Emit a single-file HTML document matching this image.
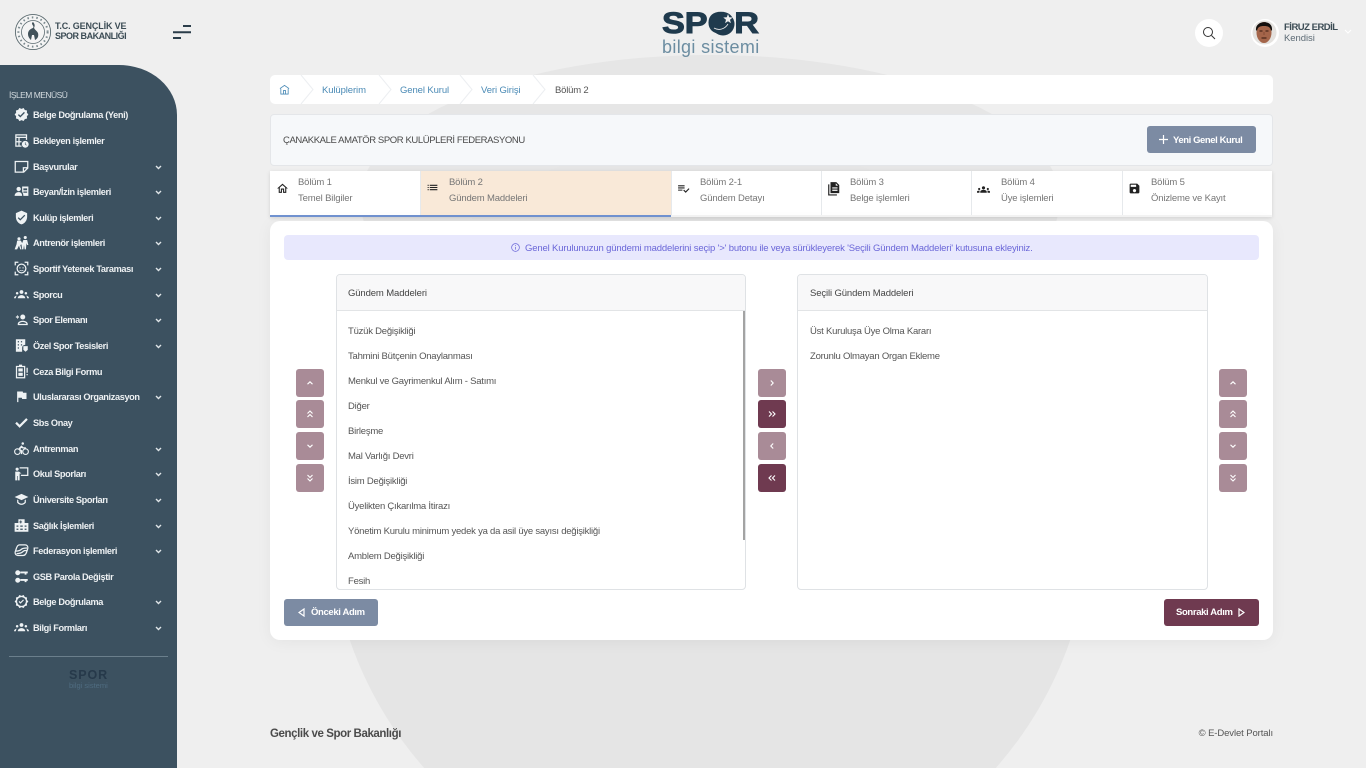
<!DOCTYPE html>
<html lang="tr"><head><meta charset="utf-8"><title>Spor Bilgi Sistemi</title>
<style>
*{box-sizing:border-box}
html,body{margin:0;padding:0;width:1366px;height:768px;overflow:hidden}
body{background:#efefef;font-family:"Liberation Sans",sans-serif;font-size:9.5px;color:#555}
#root{position:relative;width:1366px;height:768px;overflow:hidden;background:#efefef}
.a,.t,.i{position:absolute}
.t{white-space:nowrap;line-height:12px}
#side{position:absolute;left:0;top:65px;width:177px;height:703px;background:#3c5160;border-top-right-radius:58px 50px}
.m{position:absolute;left:33px;margin-top:1px;color:#eef1f3;font-size:9.2px;font-weight:700;line-height:12px;white-space:nowrap;letter-spacing:-.37px}
.mi{position:absolute;left:14px;width:15px;height:15px;fill:#eef2f4}
.ch{position:absolute;left:155px;width:7px;height:5px;fill:none;stroke:#dfe5e8;stroke-width:1.4}
.card{position:absolute;background:#fff}
.bc{color:#4a8ab5;top:85px;letter-spacing:-.1px}
.sep{position:absolute;top:75px;width:14px;height:29px;fill:none;stroke:#eceef1;stroke-width:1}
.tab{position:absolute;top:171px;height:44px;background:#fff;border-right:1px solid #e6e9ec}
.tl{color:#767676;font-size:9.5px;letter-spacing:-.15px;margin-top:1px}
.ti{position:absolute;top:182px;width:13px;height:13px;fill:#222}
.b{position:absolute;width:28px;height:28px;border-radius:3px;background:#a98b97}
.b.d{background:#6f3a50}
.b svg{position:absolute;left:9px;top:9px;width:10px;height:10px;fill:none;stroke:#fff;stroke-width:1.1}
.panel{position:absolute;top:274px;height:316px;background:#fff;border:1px solid #dfe2e5;border-radius:4px;overflow:hidden}
.ph{position:absolute;left:0;top:0;right:0;height:36px;background:#f8f8f9;border-bottom:1px solid #e2e4e6}
.it{color:#555;font-size:9.5px;letter-spacing:-.23px;margin-top:1px}
</style></head><body><div id="root">

<svg class="i" style="left:0;top:0;width:1366px;height:768px" viewBox="0 0 1366 768"><ellipse cx="710" cy="200" rx="350" ry="145" fill="#e6e6e6"/><path d="M424.2 768A381 381 0 1 1 995.8 768Z" fill="#e5e5e5"/></svg>

<!-- header -->
<svg class="i" style="left:14px;top:13px;width:38px;height:38px" viewBox="0 0 38 38"><circle cx="19" cy="19" r="17.600" fill="#f4f4f4" stroke="#5b6b70" stroke-width=".9"/><circle cx="19" cy="19" r="11.500" fill="none" stroke="#5b6b70" stroke-width=".8"/><circle cx="19" cy="19" r="14.600" fill="none" stroke="#7b8a8f" stroke-width="2" stroke-dasharray="1.500 3"/><path d="M19 9c-3 2 2 4 0 6-3 1-5 3-5 6 0 3 2 5 3 6l1-5 2 0 1 5c2-1 4-3 3-7-1-2-3-3-4-5 1-2 1-4-1-6z" fill="#42525a"/></svg>
<div class="t" style="left:55px;top:21px;font-size:9px;font-weight:700;color:#3c4c55;letter-spacing:-.14px;line-height:11px">T.C. GENÇLİK VE</div>
<div class="t" style="left:55px;top:31px;font-size:9px;font-weight:700;color:#3c4c55;letter-spacing:-.49px;line-height:11px">SPOR BAKANLIĞI</div>
<svg class="i" style="left:172px;top:24px;width:20px;height:16px" viewBox="0 0 20 16"><g stroke="#2b3d4a" stroke-width="2"><path d="M11 2h8M1 8.200h18M1 14h8"/></g></svg>

<div class="t" style="left:662px;top:8px;font-size:30px;line-height:32px;font-weight:700;color:#1f3a4d;-webkit-text-stroke:1px #1f3a4d;transform:scaleX(1.14);transform-origin:left">SPOR</div>
<svg class="i" style="left:710px;top:11px;width:28px;height:26px" viewBox="0 0 28 26"><circle cx="13" cy="13" r="11.500" fill="#1f3a4d"/><path d="M18 3l1.200 3.300 3.500.2-2.700 2.200.9 3.400-2.900-1.900-2.900 1.900.9-3.400-2.700-2.200 3.500-.2z" fill="#efefef"/><path d="M4 17c5 3 11 1 14-4" fill="none" stroke="#efefef" stroke-width=".8"/></svg>
<div class="t" style="left:662px;top:38px;font-size:18px;line-height:19px;color:#6c8da1;letter-spacing:.35px">bilgi sistemi</div>

<div class="a" style="left:1195px;top:19px;width:28px;height:28px;border-radius:50%;background:#fff"></div>
<svg class="i" style="left:1202px;top:26px;width:14px;height:14px" viewBox="0 0 14 14" fill="none" stroke="#333" stroke-width="1"><circle cx="6" cy="6" r="4.500"/><path d="M9.500 9.500L13 13"/></svg>
<svg class="i" style="left:1251px;top:19px;width:28px;height:28px" viewBox="0 0 28 28"><circle cx="14" cy="14" r="14" fill="#fff"/><clipPath id="c"><circle cx="13.500" cy="13.500" r="12"/></clipPath><g clip-path="url(#c)"><rect width="28" height="28" fill="#e4e2df"/><path d="M0 28l6-4 8 2 8-2 6 4z" fill="#efece8"/><ellipse cx="13" cy="13.500" rx="7.500" ry="10.500" fill="#a4654a"/><path d="M5 11C4 1 22 0 21 11l-1 1c-.5-4-3-5-7-5s-6.500 1-7 5z" fill="#14100e"/><path d="M8.500 12h3M14.500 12h3M10.500 19h5" stroke="#35180f" stroke-width="1"/><path d="M13 13v3" stroke="#7d4530" stroke-width=".8"/></g></svg>
<div class="t" style="left:1284px;top:22px;font-size:9.500px;font-weight:700;color:#3c4c55;letter-spacing:-.5px">FİRUZ ERDİL</div>
<div class="t" style="left:1284px;top:33px;font-size:9.500px;color:#5d6b75;letter-spacing:-.05px">Kendisi</div>
<svg class="i" style="left:1344px;top:29px;width:8px;height:5px" viewBox="0 0 8 5" fill="none" stroke="#fff" stroke-width="1"><path d="M1 1l3 3 3-3"/></svg>

<!-- sidebar -->
<div id="side"></div>
<div class="t" style="left:9px;top:89px;color:#d3dade;font-size:8.500px;letter-spacing:-.53px">İŞLEM MENÜSÜ</div>

<svg class="mi" style="top:107px" viewBox="0 0 24 24"><path d="M23 12l-2.440-2.790.34-3.690-3.610-.82-1.890-3.200L12 2.960 8.600 1.500 6.710 4.690 3.100 5.500l.34 3.700L1 12l2.440 2.790-.34 3.700 3.610.82L8.600 22.500l3.400-1.470 3.400 1.460 1.890-3.190 3.610-.82-.34-3.690L23 12zm-12.910 4.720l-3.800-3.810 1.480-1.480 2.320 2.330 5.850-5.870 1.480 1.480-7.330 7.350z"/></svg>
<div class="m" style="top:108px">Belge Doğrulama (Yeni)</div>

<svg class="mi" style="top:133px" viewBox="0 0 24 24"><path d="M2 2h19v9h-2V8H9v5h3v2H9v5h3v2H2zm2 6v5h3V8zm0 7v5h3v-5zM4 4v2h15V4z"/><circle cx="18" cy="18" r="5.500"/><path d="M18 15v3l2 1.500" stroke="#3c5160" fill="none"/></svg>
<div class="m" style="top:134px">Bekleyen işlemler</div>

<svg class="mi" style="top:159px" viewBox="0 0 24 24"><path d="M1 3h22v12l-7 7H1zm2 2v15h11v-7h7V5zm13 10v4l4-4z"/></svg>
<div class="m" style="top:160px">Başvurular</div>

<svg class="mi" style="top:184px" viewBox="0 0 24 24"><circle cx="7.500" cy="8" r="3.500"/><path d="M1 19c0-4 3-6 6.500-6s5.500 2 5.500 6z"/><path d="M13 4h10v15h-8c0-3-1-5-2-7zm2 3v3h6V7zm0 5v2h6v-2z"/></svg>
<div class="m" style="top:185px">Beyan/İzin işlemleri</div>

<svg class="mi" style="top:210px" viewBox="0 0 24 24"><path d="M12 1L3 5v6c0 5.550 3.840 10.740 9 12 5.160-1.260 9-6.450 9-12V5l-9-4zm-2 16l-4-4 1.410-1.410L10 14.170l6.590-6.590L18 9l-8 8z"/></svg>
<div class="m" style="top:211px">Kulüp işlemleri</div>

<svg class="mi" style="top:235px" viewBox="0 0 24 24"><circle cx="8" cy="6" r="2.500"/><circle cx="18" cy="4" r="2.500"/><path d="M5 9h6l2 4 2-5h6l2 8h-2l-1-3-1 10h-2l-1-7-1 7h-2l-1-8-2 1 2 7h-2l-2-6-3 6H1l3-8z"/></svg>
<div class="m" style="top:236px">Antrenör işlemleri</div>

<svg class="mi" style="top:261px" viewBox="0 0 24 24"><path d="M1 7V1h6v2H3v4zm16-6h6v6h-2V3h-4zM1 17h2v4h4v2H1zm20 0h2v6h-6v-2h4z"/><circle cx="12" cy="12" r="7" fill="none" stroke="#eef2f4" stroke-width="2"/><circle cx="9.500" cy="11" r="1"/><circle cx="14.500" cy="11" r="1"/><path d="M9 14.500c2 1.500 4 1.500 6 0" fill="none" stroke="#eef2f4"/></svg>
<div class="m" style="top:262px">Sportif Yetenek Taraması</div>

<svg class="mi" style="top:287px" viewBox="0 0 24 24"><circle cx="12" cy="8" r="3"/><circle cx="5" cy="10" r="2"/><circle cx="19" cy="10" r="2"/><path d="M6 18c0-3 3-5 6-5s6 2 6 5zM0 18c0-2 2-4 4.500-4-1 1-1.500 2.500-1.500 4zm24 0c0-2-2-4-4.500-4 1 1 1.500 2.500 1.500 4z"/></svg>
<div class="m" style="top:288px">Sporcu</div>

<svg class="mi" style="top:312px" viewBox="0 0 24 24"><circle cx="14" cy="8" r="4"/><path d="M6 21v-2c0-3 4-5 8-5s8 2 8 5v2zm2-2h12c-1-2-3-3-6-3s-5 1-6 3zM3 9V7h2V5h1v2h2v2H6v2H5V9z"/></svg>
<div class="m" style="top:313px">Spor Elemanı</div>

<svg class="mi" style="top:338px" viewBox="0 0 24 24"><path d="M3 2h15v9c-3 0-5 2-5 5v6H3zm3 3v2h2V5zm5 0v2h2V5zm-5 5v2h2v-2zm5 0v2h2v-2zm-5 5v2h2v-2z"/><path d="M15 13h7v6l-3.500 3-3.500-3z"/></svg>
<div class="m" style="top:339px">Özel Spor Tesisleri</div>

<svg class="mi" style="top:364px" viewBox="0 0 24 24"><path d="M3 3h5V1h5v2h5v20H3zm2 2v16h11V5zm2 2h7v5H7zm0 7h7v5H7z"/><path d="M20 6h2v8h-2zm0 10h2v2h-2z"/></svg>
<div class="m" style="top:365px">Ceza Bilgi Formu</div>

<svg class="mi" style="top:389px" viewBox="0 0 24 24"><path d="M14.400 6L14 4H5v17h2v-7h5.600l.4 2h7V6z"/></svg>
<div class="m" style="top:390px">Uluslararası Organizasyon</div>

<svg class="mi" style="top:415px" viewBox="0 0 24 24"><path d="M9 20.500L2 13.500l2.500-2.500L9 15.500 19.500 5 22 7.500z"/></svg>
<div class="m" style="top:416px">Sbs Onay</div>

<svg class="mi" style="top:441px" viewBox="0 0 24 24"><circle cx="5.500" cy="17" r="4.500" fill="none" stroke="#eef2f4" stroke-width="1.800"/><circle cx="18.500" cy="17" r="4.500" fill="none" stroke="#eef2f4" stroke-width="1.800"/><circle cx="14" cy="4" r="2"/><path d="M8 11l4-4 3 3h4v2h-5l-2-1-2 2 3 2v6h-2v-5l-4-2z"/></svg>
<div class="m" style="top:442px">Antrenman</div>

<svg class="mi" style="top:466px" viewBox="0 0 24 24"><circle cx="5" cy="5" r="2.500"/><path d="M2 9h6l4 3h-3v11H6v-7H5v7H2zM9 2h14v14H11v-2h10V4H9z"/></svg>
<div class="m" style="top:467px">Okul Sporları</div>

<svg class="mi" style="top:492px" viewBox="0 0 24 24"><path d="M12 3l11 5-11 5L1 8z"/><path d="M5 12v5c2 2.500 4 3.500 7 3.500s5-1 7-3.500v-5l-2 1v3c-1 1.500-3 2.500-5 2.500s-4-1-5-2.500v-3z"/></svg>
<div class="m" style="top:493px">Üniversite Sporları</div>

<svg class="mi" style="top:518px" viewBox="0 0 24 24"><path d="M7 2h10v6h6v14H1V8h6zm3 2v1.500H8.500V7H10v1.500h1.500V7H13V5.500h-1.500V4zM4 12v2h3v-2zm6 0v2h4v-2zm7 0v2h3v-2zM4 17v2h3v-2zm6 0v2h4v-2zm7 0v2h3v-2z"/></svg>
<div class="m" style="top:519px">Sağlık İşlemleri</div>

<svg class="mi" style="top:543px" viewBox="0 0 24 24"><g fill="none" stroke="#eef2f4" stroke-width="2"><path d="M9 3h9c3 0 5 3 4 6l-2 6c-1 3-3 5-6 5H6c-3 0-5-3-4-6l2-6c1-3 3-5 5-5z"/><path d="M3 13c5 0 7-1 9-3s5-2 9-2M4 17c5 0 8-1 10-3s3-2 6-2"/></g></svg>
<div class="m" style="top:544px">Federasyon işlemleri</div>

<svg class="mi" style="top:569px" viewBox="0 0 24 24"><circle cx="6" cy="6" r="4"/><circle cx="6" cy="18" r="4"/><path d="M10 4h12v3h-2v2h-3V7h-7zM10 16h12v3h-2v2h-3v-2h-7z"/></svg>
<div class="m" style="top:570px">GSB Parola Değiştir</div>

<svg class="mi" style="top:594px" viewBox="0 0 24 24"><path d="M23 12l-2.440-2.790.34-3.690-3.610-.82-1.890-3.200L12 2.960 8.600 1.500 6.710 4.690 3.100 5.500l.34 3.700L1 12l2.440 2.790-.34 3.700 3.610.82L8.600 22.500l3.400-1.470 3.400 1.460 1.890-3.190 3.610-.82-.34-3.690L23 12zM12 5a7 7 0 1 1 0 14 7 7 0 0 1 0-14zm-1.600 10.500l-3-3 1.300-1.300 1.700 1.700 4.200-4.200 1.300 1.300z" fill-rule="evenodd"/></svg>
<div class="m" style="top:595px">Belge Doğrulama</div>

<svg class="mi" style="top:620px" viewBox="0 0 24 24"><circle cx="12" cy="8" r="3"/><circle cx="5" cy="10" r="2"/><circle cx="19" cy="10" r="2"/><path d="M6 18c0-3 3-5 6-5s6 2 6 5zM0 18c0-2 2-4 4.500-4-1 1-1.500 2.500-1.500 4zm24 0c0-2-2-4-4.500-4 1 1 1.500 2.500 1.500 4z"/></svg>
<div class="m" style="top:621px">Bilgi Formları</div>

<svg class="ch" style="top:165px" viewBox="0 0 7 5"><path d="M1 1l2.500 2.500L6 1"/></svg>
<svg class="ch" style="top:190px" viewBox="0 0 7 5"><path d="M1 1l2.500 2.500L6 1"/></svg>
<svg class="ch" style="top:216px" viewBox="0 0 7 5"><path d="M1 1l2.500 2.500L6 1"/></svg>
<svg class="ch" style="top:241px" viewBox="0 0 7 5"><path d="M1 1l2.500 2.500L6 1"/></svg>
<svg class="ch" style="top:267px" viewBox="0 0 7 5"><path d="M1 1l2.500 2.500L6 1"/></svg>
<svg class="ch" style="top:293px" viewBox="0 0 7 5"><path d="M1 1l2.500 2.500L6 1"/></svg>
<svg class="ch" style="top:318px" viewBox="0 0 7 5"><path d="M1 1l2.500 2.500L6 1"/></svg>
<svg class="ch" style="top:344px" viewBox="0 0 7 5"><path d="M1 1l2.500 2.500L6 1"/></svg>
<svg class="ch" style="top:395px" viewBox="0 0 7 5"><path d="M1 1l2.500 2.500L6 1"/></svg>
<svg class="ch" style="top:447px" viewBox="0 0 7 5"><path d="M1 1l2.500 2.500L6 1"/></svg>
<svg class="ch" style="top:472px" viewBox="0 0 7 5"><path d="M1 1l2.500 2.500L6 1"/></svg>
<svg class="ch" style="top:498px" viewBox="0 0 7 5"><path d="M1 1l2.500 2.500L6 1"/></svg>
<svg class="ch" style="top:524px" viewBox="0 0 7 5"><path d="M1 1l2.500 2.500L6 1"/></svg>
<svg class="ch" style="top:549px" viewBox="0 0 7 5"><path d="M1 1l2.500 2.500L6 1"/></svg>
<svg class="ch" style="top:600px" viewBox="0 0 7 5"><path d="M1 1l2.500 2.500L6 1"/></svg>
<svg class="ch" style="top:626px" viewBox="0 0 7 5"><path d="M1 1l2.500 2.500L6 1"/></svg>

<div class="a" style="left:9px;top:656px;width:159px;height:1px;background:#6b7f8c"></div>
<div class="t" style="left:69px;top:669px;font-size:12.500px;font-weight:700;color:#26394a;letter-spacing:.9px;line-height:13px">SPOR</div>
<div class="t" style="left:69px;top:681px;font-size:7.500px;color:#4f6c80;line-height:9px">bilgi sistemi</div>

<!-- breadcrumb -->
<div class="card" style="left:270px;top:75px;width:1003px;height:29px;border-radius:5px"></div>
<svg class="i" style="left:279px;top:84px;width:11px;height:11px" viewBox="0 0 12 12" fill="none" stroke="#4a8ab5" stroke-width=".9"><path d="M1 5l5-3.500L11 5M2 5v6h8V5M5 11V7h2v4"/></svg>
<svg class="sep" style="left:300px" viewBox="0 0 14 29"><path d="M1 0l12 14.500L1 29"/></svg>
<div class="t bc" style="left:322px">Kulüplerim</div>
<svg class="sep" style="left:378px" viewBox="0 0 14 29"><path d="M1 0l12 14.500L1 29"/></svg>
<div class="t bc" style="left:400px">Genel Kurul</div>
<svg class="sep" style="left:459px" viewBox="0 0 14 29"><path d="M1 0l12 14.500L1 29"/></svg>
<div class="t bc" style="left:481px">Veri Girişi</div>
<svg class="sep" style="left:532px" viewBox="0 0 14 29"><path d="M1 0l12 14.500L1 29"/></svg>
<div class="t" style="left:555px;top:85px;color:#555;letter-spacing:-.2px">Bölüm 2</div>

<!-- org header -->
<div class="a" style="left:270px;top:114px;width:1003px;height:52px;background:#f6f8fa;border:1px solid #e4e6e9;border-radius:4px"></div>
<div class="t" style="left:283px;top:135px;font-size:9.500px;color:#4a4a4a;letter-spacing:-.4px">ÇANAKKALE AMATÖR SPOR KULÜPLERİ FEDERASYONU</div>
<div class="a" style="left:1147px;top:126px;width:109px;height:27px;background:#7c8ba3;border-radius:3px"></div>
<svg class="i" style="left:1159px;top:135px;width:9px;height:9px" viewBox="0 0 9 9"><path d="M4.500 0v9M0 4.500h9" stroke="#fff" stroke-width="1.200"/></svg>
<div class="t" style="left:1173px;top:135px;color:#fff;font-weight:700;letter-spacing:-.42px">Yeni Genel Kurul</div>

<!-- tabs -->
<div class="a" style="left:270px;top:171px;width:1002px;height:46px;box-shadow:0 1px 4px rgba(0,0,0,.12)"></div>
<div class="tab" style="left:270px;width:151px"></div>
<div class="tab" style="left:421px;width:251px;background:#f9e9d8"></div>
<div class="tab" style="left:672px;width:150px"></div>
<div class="tab" style="left:822px;width:150px"></div>
<div class="tab" style="left:972px;width:151px"></div>
<div class="tab" style="left:1123px;width:149px;border-right:0"></div>
<div class="a" style="left:270px;top:215px;width:401px;height:2px;background:#7193d1"></div>
<div class="a" style="left:671px;top:215px;width:601px;height:2px;background:#f4f4f4"></div>

<svg class="ti" style="left:276px" viewBox="0 0 24 24"><path d="M12 5.690l5 4.500V18h-2v-6H9v6H7v-7.810l5-4.500M12 3L2 12h3v8h6v-6h2v6h6v-8h3L12 3z"/></svg>
<svg class="ti" style="left:426px;top:181px" viewBox="0 0 24 24"><path d="M3 13h2v-2H3v2zm0 4h2v-2H3v2zm0-8h2V7H3v2zm4 4h14v-2H7v2zm0 4h14v-2H7v2zM7 7v2h14V7H7z"/></svg>
<svg class="ti" style="left:677px;top:182px" viewBox="0 0 24 24"><path d="M14 10H2v2h12v-2zm0-4H2v2h12V6zM2 16h8v-2H2v2zm19.500-4.500L23 13l-6.990 7-4.510-4.500L13 14l3.010 3 5.490-5.500z"/></svg>
<svg class="ti" style="left:827px;top:181px;width:14px;height:15px" viewBox="0 0 24 24"><path d="M6 1h10l5 5v14H6zm9 2v4h4zM9 10v2h9v-2zm0 4v2h9v-2zM2 5h2v17h13v2H2z"/></svg>
<svg class="ti" style="left:977px;top:183px" viewBox="0 0 24 24"><path d="M12 12.750c1.630 0 3.070.39 4.240.9 1.080.48 1.760 1.560 1.760 2.730V18H6v-1.610c0-1.180.68-2.260 1.760-2.730 1.170-.52 2.610-.91 4.240-.91zM4 13c1.100 0 2-.9 2-2s-.9-2-2-2-2 .9-2 2 .9 2 2 2zm1.130 1.100C4.760 14.040 4.390 14 4 14c-.99 0-1.930.21-2.780.58C.48 14.900 0 15.620 0 16.430V18h4.500v-1.610c0-.83.23-1.610.63-2.290zM20 13c1.100 0 2-.9 2-2s-.9-2-2-2-2 .9-2 2 .9 2 2 2zm4 3.430c0-.81-.48-1.530-1.220-1.850-.85-.37-1.790-.58-2.780-.58-.39 0-.76.04-1.130.1.400.68.630 1.460.630 2.290V18H24v-1.570zM12 6c1.660 0 3 1.340 3 3s-1.340 3-3 3-3-1.340-3-3 1.340-3 3-3z"/></svg>
<svg class="ti" style="left:1128px;top:182px" viewBox="0 0 24 24"><path d="M17 3H5c-1.110 0-2 .9-2 2v14c0 1.100.89 2 2 2h14c1.100 0 2-.9 2-2V7l-4-4zm-5 16c-1.660 0-3-1.340-3-3s1.340-3 3-3 3 1.340 3 3-1.340 3-3 3zm3-10H5V5h10v4z"/></svg>

<div class="t tl" style="left:298px;top:176px">Bölüm 1</div><div class="t tl" style="left:298px;top:192px">Temel Bilgiler</div>
<div class="t tl" style="left:449px;top:176px">Bölüm 2</div><div class="t tl" style="left:449px;top:192px">Gündem Maddeleri</div>
<div class="t tl" style="left:700px;top:176px">Bölüm 2-1</div><div class="t tl" style="left:700px;top:192px">Gündem Detayı</div>
<div class="t tl" style="left:850px;top:176px">Bölüm 3</div><div class="t tl" style="left:850px;top:192px">Belge işlemleri</div>
<div class="t tl" style="left:1001px;top:176px">Bölüm 4</div><div class="t tl" style="left:1001px;top:192px">Üye işlemleri</div>
<div class="t tl" style="left:1151px;top:176px">Bölüm 5</div><div class="t tl" style="left:1151px;top:192px">Önizleme ve Kayıt</div>

<!-- main card -->
<div class="card" style="left:270px;top:221px;width:1003px;height:419px;border-radius:10px;box-shadow:0 2px 16px rgba(0,0,0,.05)"></div>
<div class="a" style="left:284px;top:235px;width:975px;height:25px;background:#e8e8fd;border-radius:4px"></div>
<svg class="i" style="left:511px;top:243px;width:9px;height:9px" viewBox="0 0 10 10" fill="none" stroke="#6a66d8" stroke-width=".8"><circle cx="5" cy="5" r="4.300"/><path d="M5 4.300v3M5 2.400v1"/></svg>
<div class="t" style="left:525px;top:243px;color:#6a66d8;font-size:9.500px;letter-spacing:-.16px">Genel Kurulunuzun gündemi maddelerini seçip '&gt;' butonu ile veya sürükleyerek 'Seçili Gündem Maddeleri' kutusuna ekleyiniz.</div>

<div class="panel" style="left:336px;width:410px"><div class="ph"></div>
<div class="a" style="left:406px;top:36px;width:3px;height:229px;background:#a3a3a3"></div></div>
<div class="panel" style="left:797px;width:411px"><div class="ph"></div></div>
<div class="t" style="left:348px;top:288px;color:#444;font-size:9.500px;letter-spacing:-.12px">Gündem Maddeleri</div>
<div class="t" style="left:810px;top:288px;color:#444;font-size:9.500px;letter-spacing:-.12px">Seçili Gündem Maddeleri</div>

<div class="t it" style="left:348px;top:325px">Tüzük Değişikliği</div>
<div class="t it" style="left:348px;top:350px">Tahmini Bütçenin Onaylanması</div>
<div class="t it" style="left:348px;top:375px">Menkul ve Gayrimenkul Alım - Satımı</div>
<div class="t it" style="left:348px;top:400px">Diğer</div>
<div class="t it" style="left:348px;top:425px">Birleşme</div>
<div class="t it" style="left:348px;top:450px">Mal Varlığı Devri</div>
<div class="t it" style="left:348px;top:475px">İsim Değişikliği</div>
<div class="t it" style="left:348px;top:500px">Üyelikten Çıkarılma İtirazı</div>
<div class="t it" style="left:348px;top:525px">Yönetim Kurulu minimum yedek ya da asil üye sayısı değişikliği</div>
<div class="t it" style="left:348px;top:550px">Amblem Değişikliği</div>
<div class="t it" style="left:348px;top:575px">Fesih</div>
<div class="t it" style="left:810px;top:325px">Üst Kuruluşa Üye Olma Kararı</div>
<div class="t it" style="left:810px;top:350px">Zorunlu Olmayan Organ Ekleme</div>

<!-- list buttons -->
<div class="b" style="left:296px;top:369px"><svg viewBox="0 0 10 10"><path d="M2.500 6.200L5 3.800l2.500 2.400"/></svg></div>
<div class="b" style="left:296px;top:400px"><svg viewBox="0 0 10 10"><path d="M2.500 4.500L5 2l2.500 2.500M2.500 8L5 5.500 7.500 8"/></svg></div>
<div class="b" style="left:296px;top:432px"><svg viewBox="0 0 10 10"><path d="M2.500 3.800L5 6.200l2.500-2.400"/></svg></div>
<div class="b" style="left:296px;top:464px"><svg viewBox="0 0 10 10"><path d="M2.500 2L5 4.500 7.500 2M2.500 5.500L5 8l2.500-2.500"/></svg></div>

<div class="b" style="left:758px;top:369px"><svg viewBox="0 0 10 10"><path d="M3.800 2.500L6.200 5 3.800 7.500"/></svg></div>
<div class="b d" style="left:758px;top:400px"><svg viewBox="0 0 10 10"><path d="M2 2.500L4.500 5 2 7.500M5.500 2.500L8 5 5.500 7.500"/></svg></div>
<div class="b" style="left:758px;top:432px"><svg viewBox="0 0 10 10"><path d="M6.200 2.500L3.800 5l2.400 2.500"/></svg></div>
<div class="b d" style="left:758px;top:464px"><svg viewBox="0 0 10 10"><path d="M4.500 2.500L2 5l2.500 2.500M8 2.500L5.500 5 8 7.500"/></svg></div>

<div class="b" style="left:1219px;top:369px"><svg viewBox="0 0 10 10"><path d="M2.500 6.200L5 3.800l2.500 2.400"/></svg></div>
<div class="b" style="left:1219px;top:400px"><svg viewBox="0 0 10 10"><path d="M2.500 4.500L5 2l2.500 2.500M2.500 8L5 5.500 7.500 8"/></svg></div>
<div class="b" style="left:1219px;top:432px"><svg viewBox="0 0 10 10"><path d="M2.500 3.800L5 6.200l2.500-2.400"/></svg></div>
<div class="b" style="left:1219px;top:464px"><svg viewBox="0 0 10 10"><path d="M2.500 2L5 4.500 7.500 2M2.500 5.500L5 8l2.500-2.500"/></svg></div>

<!-- nav buttons -->
<div class="a" style="left:284px;top:599px;width:94px;height:27px;background:#7c8ba3;border-radius:3px"></div>
<svg class="i" style="left:298px;top:608px;width:7px;height:9px" viewBox="0 0 7 9" fill="none" stroke="#fff" stroke-width="1.200"><path d="M6 1v7L1 4.500z"/></svg>
<div class="t" style="left:311px;top:607px;color:#fff;font-weight:700;letter-spacing:-.36px">Önceki Adım</div>
<div class="a" style="left:1164px;top:599px;width:95px;height:27px;background:#6f3a50;border-radius:3px"></div>
<div class="t" style="left:1176px;top:607px;color:#fff;font-weight:700;letter-spacing:-.36px">Sonraki Adım</div>
<svg class="i" style="left:1238px;top:608px;width:7px;height:9px" viewBox="0 0 7 9" fill="none" stroke="#fff" stroke-width="1.200"><path d="M1 1v7l5-3.500z"/></svg>

<!-- footer -->
<div class="t" style="left:270px;top:728px;font-size:11.500px;line-height:13px;font-weight:700;color:#4b4b4b;letter-spacing:-.41px">Gençlik ve Spor Bakanlığı</div>
<div class="t" style="right:93px;top:728px;font-size:9.500px;color:#555;letter-spacing:-.1px">© E-Devlet Portalı</div>

</div></body></html>
